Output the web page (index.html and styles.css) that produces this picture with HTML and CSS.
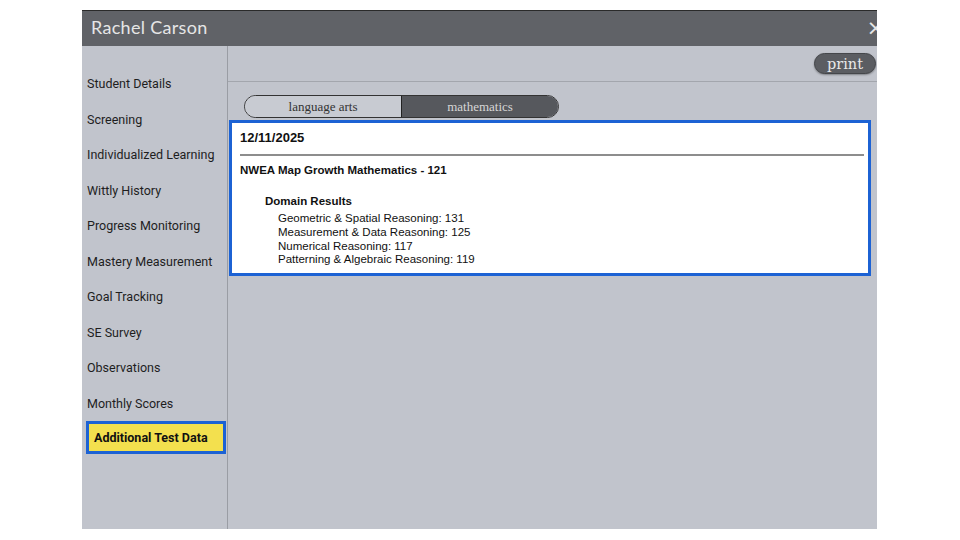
FILE: index.html
```html
<!DOCTYPE html>
<html lang="en">
  <head>
    <meta charset="UTF-8" />
    <meta name="viewport" content="width=device-width, initial-scale=1.0" />
    <title>Rachel Carson</title>
    <link rel="stylesheet" href="styles.css">
  </head>
  <body>
    <div class="panel">
      <div class="header">
        <span class="name">Rachel Carson</span>
        <span class="close">&times;</span>
      </div>
      <div class="body">
        <ul class="sidebar">
          <li>Student Details</li>
          <li>Screening</li>
          <li>Individualized Learning</li>
          <li>Wittly History</li>
          <li>Progress Monitoring</li>
          <li>Mastery Measurement</li>
          <li>Goal Tracking</li>
          <li>SE Survey</li>
          <li>Observations</li>
          <li>Monthly Scores</li>
          <li class="active">Additional Test Data</li>
        </ul>
        <div class="main">
          <div class="toolbar">
            <button class="print">print</button>
          </div>
          <div class="tabs">
            <div class="tab">language arts</div>
            <div class="tab selected">mathematics</div>
          </div>
          <div class="card">
            <div class="date">12/11/2025</div>
            <div class="test">NWEA Map Growth Mathematics - 121</div>
            <div class="domain">Domain Results</div>
            <ul class="scores">
              <li>Geometric &amp; Spatial Reasoning: 131</li>
              <li>Measurement &amp; Data Reasoning: 125</li>
              <li>Numerical Reasoning: 117</li>
              <li>Patterning &amp; Algebraic Reasoning: 119</li>
            </ul>
          </div>
        </div>
      </div>
    </div>
  </body>
</html>
```

FILE: styles.css
```css
* {
  box-sizing: border-box;
  margin: 0;
  padding: 0;
}
body {
  width: 960px;
  height: 540px;
  background-color: white;
  font-family: Roboto, "Liberation Sans", sans-serif;
  padding: 10px 0 0 82px;
  overflow: hidden;
}
.panel {
  width: 795px;
  height: 519px;
  background-color: #c1c4cc;
  border-top: 1px solid #2a2a2a;
  display: flex;
  flex-direction: column;
  overflow: hidden;
}
.header {
  height: 35px;
  background-color: #606267;
  display: flex;
  align-items: center;
  justify-content: space-between;
  padding: 0 0 3px 9px;
  overflow: hidden;
}
.name {
  font-family: Lato, "Noto Sans", sans-serif;
  font-size: 18px;
  color: #e6e6e6;
  letter-spacing: 0.3px;
}
.close {
  font-family: "DejaVu Sans", sans-serif;
  font-size: 22px;
  color: #e6e6e6;
  margin-right: -8px;
}
.body {
  flex: 1;
  display: flex;
}
.sidebar {
  list-style: none;
  width: 146px;
  border-right: 1px solid #9a9da4;
  padding-top: 20px;
}
.sidebar li {
  height: 35.5px;
  line-height: 35.5px;
  padding-left: 5px;
  font-size: 12.5px;
  color: #1e1e1e;
  white-space: nowrap;
}
.sidebar li.active {
  margin: 0 1px 0 4px;
  height: 33px;
  line-height: 27px;
  padding-left: 5px;
  background-color: #f3e04e;
  border: 3px solid #1c62d4;
  font-weight: bold;
  color: #111;
}
.main {
  flex: 1;
  display: flex;
  flex-direction: column;
}
.toolbar {
  height: 36px;
  border-bottom: 1px solid #a3a6ad;
  display: flex;
  justify-content: flex-end;
  align-items: center;
  padding-right: 1px;
}
.print {
  width: 62px;
  height: 21px;
  border: 1px solid #45474b;
  border-radius: 11px;
  background-color: #5b5d62;
  color: #e8e8e8;
  font-family: "DejaVu Serif", serif;
  font-size: 14.5px;
  line-height: 18px;
  box-shadow: 0 1px 2px rgba(0, 0, 0, 0.35);
}
.tabs {
  display: flex;
  margin: 13px 0 0 16px;
  width: 315px;
  height: 23px;
  border: 1px solid #333;
  border-radius: 12px;
  overflow: hidden;
}
.tab {
  flex: 1;
  text-align: center;
  line-height: 21px;
  font-family: "Liberation Serif", serif;
  font-size: 13px;
  color: #333;
  background-color: #c8cbd2;
}
.tab.selected {
  background-color: #56585d;
  color: #d6d6d6;
  border-left: 1px solid #222;
}
.card {
  margin: 2px 6px 0 1px;
  background-color: white;
  border: 3px solid #1c62d4;
  padding: 6px 4px 6px 8px;
  font-family: "Liberation Sans", Arial, sans-serif;
  color: #111;
}
.date {
  font-size: 13px;
  font-weight: bold;
  line-height: 18px;
  padding-bottom: 7px;
  border-bottom: 2px solid #8d8d8d;
}
.test {
  font-size: 11.5px;
  font-weight: bold;
  margin-top: 7px;
  line-height: 15px;
}
.domain {
  font-size: 11.5px;
  font-weight: bold;
  margin: 16px 0 3px 25px;
  line-height: 15px;
}
.scores {
  list-style: none;
  margin-left: 38px;
  font-size: 11.5px;
  line-height: 13.8px;
}
```
